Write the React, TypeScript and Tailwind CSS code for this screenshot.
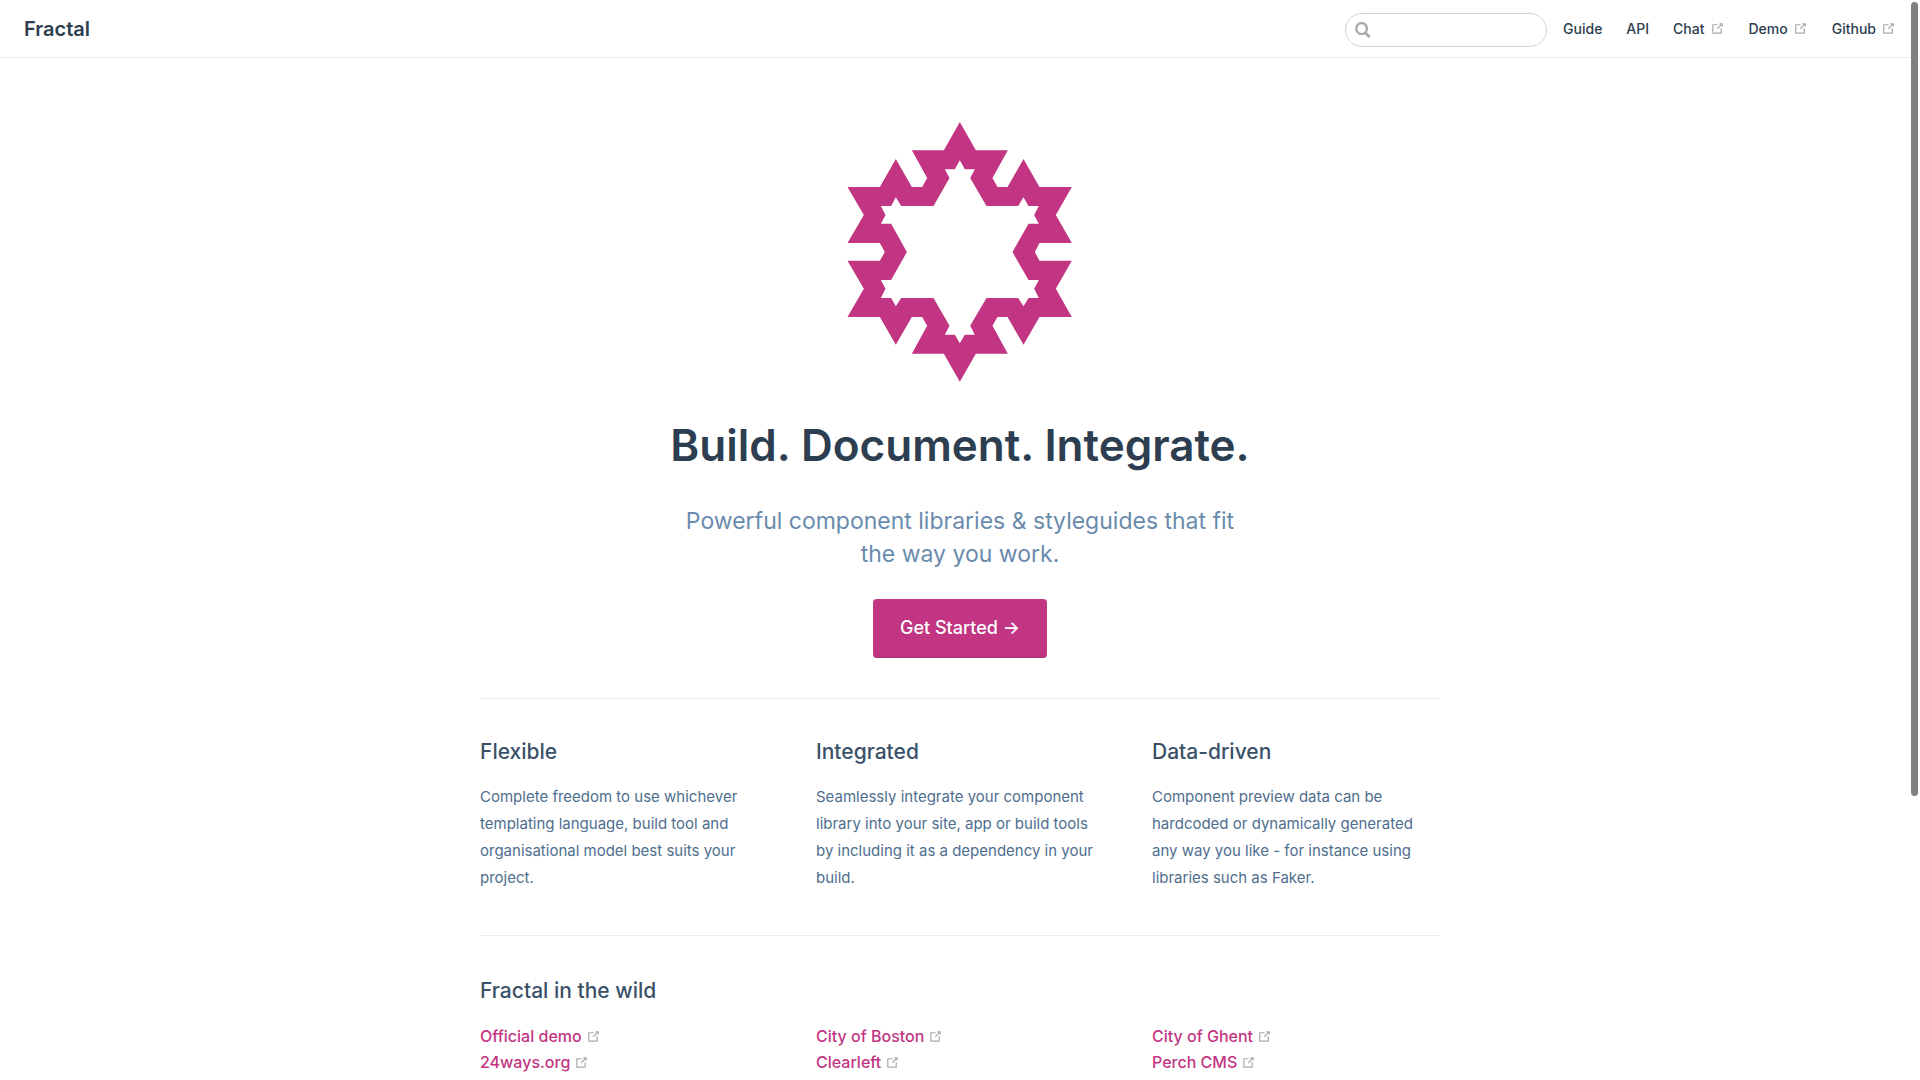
import React from "react";

function OutboundIcon() {
  return (
    <svg
      aria-hidden="true"
      viewBox="0 0 100 100"
      className="inline-block size-[15px] shrink-0 fill-[#aaa]"
    >
      <path d="M18.8,85.1h56l0,0c2.2,0,4-1.8,4-4v-32h-8v28h-48v-48h28v-8h-32l0,0c-2.2,0-4,1.8-4,4v56C14.8,83.3,16.6,85.1,18.8,85.1z" />
      <polygon points="45.7,48.7 51.3,54.3 77.2,28.5 77.2,37.2 85.2,37.2 85.2,14.9 62.8,14.9 62.8,22.9 71.5,22.9" />
    </svg>
  );
}

function SnowflakeLogo() {
  return (
    <svg role="img" aria-label="Fractal" viewBox="50 35 680 780" className="h-[260px] w-[227px]">
      <path
        fill="#c23582"
        fillRule="evenodd"
        d="M388,35 436,120 532,120 486,203 501,230 531,230 579,146 627,230 724,230 676,314 724,398 627,398 613,425 627,451 724,451 676,535 724,620 627,620 579,703 531,620 501,620 486,646 532,730 436,730 388,814 340,730 244,730 290,646 275,620 244,620 196,703 148,620 51,620 100,535 51,451 148,451 163,425 148,398 51,398 100,314 51,230 148,230 196,146 244,230 275,230 290,203 244,120 340,120Z
        M388,150 403,177 433,177 419,203 468,287 563,287 579,261 594,287 625,287 611,314 625,340 594,340 546,425 594,509 625,509 611,535 625,563 594,563 579,588 563,563 468,563 419,646 433,673 403,673 388,699 373,673 343,673 357,646 309,563 212,563 196,588 182,563 151,563 165,535 151,509 182,509 229,425 182,340 151,340 165,314 151,287 182,287 196,261 212,287 309,287 357,203 343,177 373,177Z"
      />
    </svg>
  );
}

const navLinks = [
  { label: "Guide", outbound: false },
  { label: "API", outbound: false },
  { label: "Chat", outbound: true },
  { label: "Demo", outbound: true },
  { label: "Github", outbound: true },
];

const features = [
  {
    title: "Flexible",
    text: "Complete freedom to use whichever templating language, build tool and organisational model best suits your project.",
  },
  {
    title: "Integrated",
    text: "Seamlessly integrate your component library into your site, app or build tools by including it as a dependency in your build.",
  },
  {
    title: "Data-driven",
    text: "Component preview data can be hardcoded or dynamically generated any way you like - for instance using libraries such as Faker.",
  },
];

const sites = ["Official demo", "City of Boston", "City of Ghent", "24ways.org", "Clearleft", "Perch CMS"];

export default function App() {
  return (
    <div className="min-h-screen bg-white font-['Inter',sans-serif] text-[#2c3e50] antialiased">
      <header className="flex h-[58px] items-center justify-between border-b border-[#eaecef] px-6">
        <a href="#" className="pt-px text-xl font-semibold">
          Fractal
        </a>
        <div className="flex items-center gap-4">
          <form role="search" className="relative mt-0.5 flex">
            <svg
              aria-hidden="true"
              viewBox="0 0 16 16"
              className="absolute top-[9px] left-[10px] size-4 fill-none stroke-[#aaa]"
            >
              <ellipse cx="6.6" cy="6.6" rx="5.3" ry="5.6" strokeWidth="2.3" />
              <path d="M10.2 10.8 14.6 15.2" strokeWidth="2.8" />
            </svg>
            <input
              type="text"
              aria-label="Search"
              className="h-[34px] w-[202px] rounded-full border border-[#cfd4db] pr-2 pl-8 text-sm outline-none"
            />
          </form>
          <nav className="flex items-center gap-6 text-sm font-medium">
            {navLinks.map((link) => (
              <a key={link.label} href="#" className="flex items-center gap-[5px]">
                {link.label}
                {link.outbound && <OutboundIcon />}
              </a>
            ))}
          </nav>
        </div>
      </header>

      <main className="mx-auto max-w-[960px]">
        <section className="flex flex-col items-center pt-16 text-center">
          <SnowflakeLogo />
          <h1 className="mt-[33px] text-[44px] leading-[60px] font-semibold">
            Build. Document. Integrate.
          </h1>
          <p className="mt-[30px] max-w-[560px] text-[23px] leading-[33px] text-[#6a8bad]">
            Powerful component libraries &amp; styleguides that fit the way you work.
          </p>
          <a
            href="#"
            className="mt-7 flex h-[59px] items-center rounded border-b border-[#ae3075] bg-[#c23582] px-[27px] text-lg font-medium text-white"
          >
            Get Started →
          </a>
        </section>

        <section className="mt-10 grid grid-cols-3 gap-12 border-t border-[#eaecef] pt-9">
          {features.map((feature) => (
            <div key={feature.title}>
              <h2 className="text-[21px] leading-[34px] font-medium text-[#3a5169]">{feature.title}</h2>
              <p className="mt-3.5 text-[15px] leading-[27px] text-[#4e6e8e]">{feature.text}</p>
            </div>
          ))}
        </section>

        <section className="mt-11 border-t border-[#eaecef] pt-[38px]">
          <h2 className="text-[21px] leading-[34px] font-medium text-[#3a5169]">Fractal in the wild</h2>
          <ul className="mt-[15px] grid grid-cols-3 gap-x-12 text-base leading-[26px] font-medium text-[#c23582]">
            {sites.map((site) => (
              <li key={site}>
                <a href="#" className="inline-flex items-center gap-1">
                  {site}
                  <OutboundIcon />
                </a>
              </li>
            ))}
          </ul>
        </section>
      </main>

      {/* Overlay scroll thumb */}
      <div aria-hidden="true" className="fixed top-[2px] right-[2px] h-[794px] w-[7px] rounded-full bg-[#808080]" />
    </div>
  );
}
